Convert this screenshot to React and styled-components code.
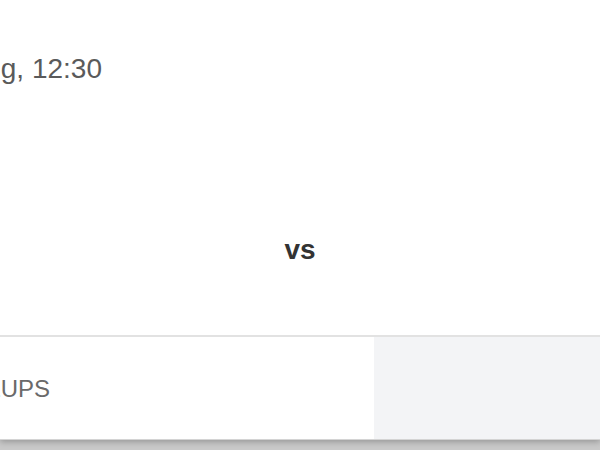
import React from 'react'
import styled, { createGlobalStyle } from 'styled-components'

const Global = createGlobalStyle`
  body {
    margin: 0;
    background: #fff;
    font-family: "Liberation Sans", Arial, sans-serif;
  }
`;

const Page = styled.div`
  width: 600px;
  height: 450px;
  overflow: hidden;
  display: flex;
  flex-direction: column;
  background: #c9c9c9;
`;

const Card = styled.div`
  background: #fff;
  display: flex;
  flex-direction: column;
  box-shadow: 0 2px 6px rgba(0, 0, 0, 0.25);
`;

const Match = styled.div`
  height: 335px;
  display: flex;
  flex-direction: column;
  padding-top: 52px;
  box-sizing: border-box;
`;

const Clipped = styled.div`
  display: flex;
  justify-content: flex-end;
  width: ${p => p.$w}px;
  overflow: hidden;
  white-space: nowrap;
`;

const DateText = styled.span`
  font-size: 28px;
  line-height: 34px;
  color: #5a5a5a;
`;

const Versus = styled.div`
  margin-top: 146px;
  text-align: center;
  font-size: 28px;
  font-weight: 700;
  line-height: 36px;
  color: #333;
`;

const Tabs = styled.div`
  display: flex;
  height: 102px;
  border-top: 2px solid #e2e2e2;
  border-bottom: 1px solid #d4d4d4;
`;

const Tab = styled.div`
  flex: ${p => (p.$active ? '0 0 374px' : '1')};
  background: ${p => (p.$active ? '#ffffff' : '#f3f4f6')};
  display: flex;
  align-items: center;
`;

const TabLabel = styled.span`
  font-size: 24px;
  color: #6a6a6a;
  margin-top: 2px;
`;

export default function App() {
  return (
    <>
      <Global />
      <Page>
        <Card>
          <Match>
            <Clipped $w={102}>
              <DateText>Sat 10 Aug, 12:30</DateText>
            </Clipped>
            <Versus>vs</Versus>
          </Match>
          <Tabs>
            <Tab $active>
              <Clipped $w={50}>
                <TabLabel>LINEUPS</TabLabel>
              </Clipped>
            </Tab>
            <Tab />
          </Tabs>
        </Card>
      </Page>
    </>
  );
}
